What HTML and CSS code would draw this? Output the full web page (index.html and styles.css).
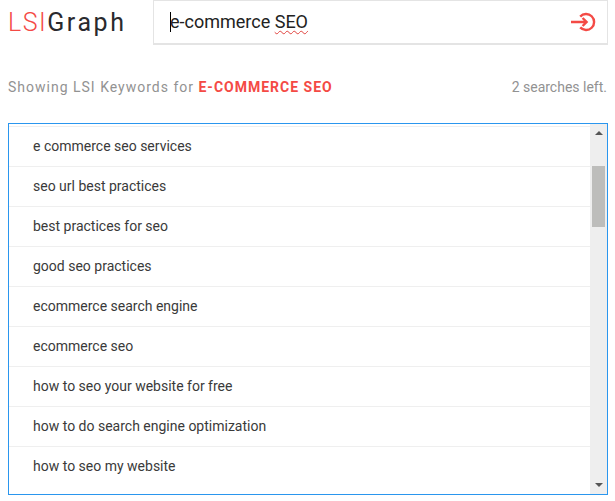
FILE: index.html
```html
<!DOCTYPE html>
<html lang="en">
<head>
<meta charset="utf-8">
<title>LSIGraph</title>
<link rel="stylesheet" href="styles.css">
</head>
<body>
<header class="top">
  <div class="logo"><span class="logo-lsi">LSI</span><span class="logo-graph">Graph</span></div>
  <div class="search">
    <span class="caret"></span>
    <span class="query">e-commerce <span class="misspelt">SEO</span></span>
    <svg class="go" width="26" height="24" viewBox="0 0 26 24" fill="none" stroke="#f44a45" stroke-width="2.4">
      <path d="M9.2 6.6A8 8 0 1 1 9.2 17.4"/>
      <path d="M0 12H15.5M11.6 8L15.6 12L11.6 16"/>
    </svg>
  </div>
</header>
<div class="status">
  <p class="showing">Showing LSI Keywords for <strong class="term">E-COMMERCE SEO</strong></p>
  <p class="left">2 searches left.</p>
</div>
<section class="results">
  <ul class="list">
    <li class="row">e commerce seo services</li>
    <li class="row">seo url best practices</li>
    <li class="row">best practices for seo</li>
    <li class="row">good seo practices</li>
    <li class="row">ecommerce search engine</li>
    <li class="row">ecommerce seo</li>
    <li class="row">how to seo your website for free</li>
    <li class="row">how to do search engine optimization</li>
    <li class="row">how to seo my website</li>
  </ul>
  <div class="scrollbar">
    <span class="arrow arrow-up"></span>
    <div class="track"><div class="thumb"></div></div>
    <span class="arrow arrow-down"></span>
  </div>
</section>
</body>
</html>
```
FILE: styles.css
```css
* { box-sizing: border-box; }
html, body { margin: 0; padding: 0; }
body {
  width: 615px;
  height: 501px;
  overflow: hidden;
  background: #fff;
  font-family: Roboto, "Liberation Sans", sans-serif;
}
.top {
  display: flex;
  align-items: flex-start;
  padding-left: 8px;
  padding-right: 7px;
}
.logo {
  width: 145px;
  height: 44px;
  display: flex;
  align-items: center;
  font-size: 25px;
  line-height: 30px;
  padding-top: 1px;
}
.logo-lsi { color: #f44a45; font-weight: 300; letter-spacing: 1.5px; }
.logo-graph { color: #2a2a2e; font-weight: 400; letter-spacing: 2.6px; }
.search {
  flex: 1;
  height: 45px;
  display: flex;
  align-items: center;
  background: #fff;
  border: 1px solid #e4e4e4;
  border-bottom-width: 2px;
  padding-left: 16px;
  padding-right: 10px;
  padding-bottom: 1px;
}
.caret { width: 1px; height: 20px; background: #000; margin-right: -1px; }
.query { flex: 1; font-size: 18px; color: #222; }
.misspelt { text-decoration: underline wavy #e0433f 1px; text-underline-offset: 2px; }
.go { display: block; }
.status {
  display: flex;
  justify-content: space-between;
  align-items: baseline;
  padding: 34px 8px 0 8px;
  height: 78px;
  color: #929292;
  font-size: 14px;
}
.status p { margin: 0; }
.showing { letter-spacing: 1px; }
.term { color: #f44a45; font-weight: 700; }
.results {
  display: flex;
  height: 372px;
  margin: 0 7px 0 8px;
  border: 1px solid #2a96ee;
}
.list {
  flex: 1;
  margin: 0;
  padding: 2px 0 0 0;
  list-style: none;
  overflow: hidden;
}
.row {
  height: 40px;
  border-top: 1px solid #efefef;
  padding-left: 24px;
  line-height: 38px;
  font-size: 14px;
  color: #3a3a3a;
}
.scrollbar {
  width: 17px;
  background: #eeeeee;
  display: flex;
  flex-direction: column;
  align-items: center;
}
.arrow { width: 0; height: 0; flex: none; border-left: 4px solid transparent; border-right: 4px solid transparent; }
.arrow-up { border-bottom: 4px solid #555; margin-top: 7px; }
.arrow-down { border-top: 4px solid #555; margin-bottom: 7px; }
.track { flex: 1; width: 100%; padding-top: 31px; padding-left: 2px; padding-right: 2px; }
.thumb { height: 61px; background: #bdbdbb; }
```
